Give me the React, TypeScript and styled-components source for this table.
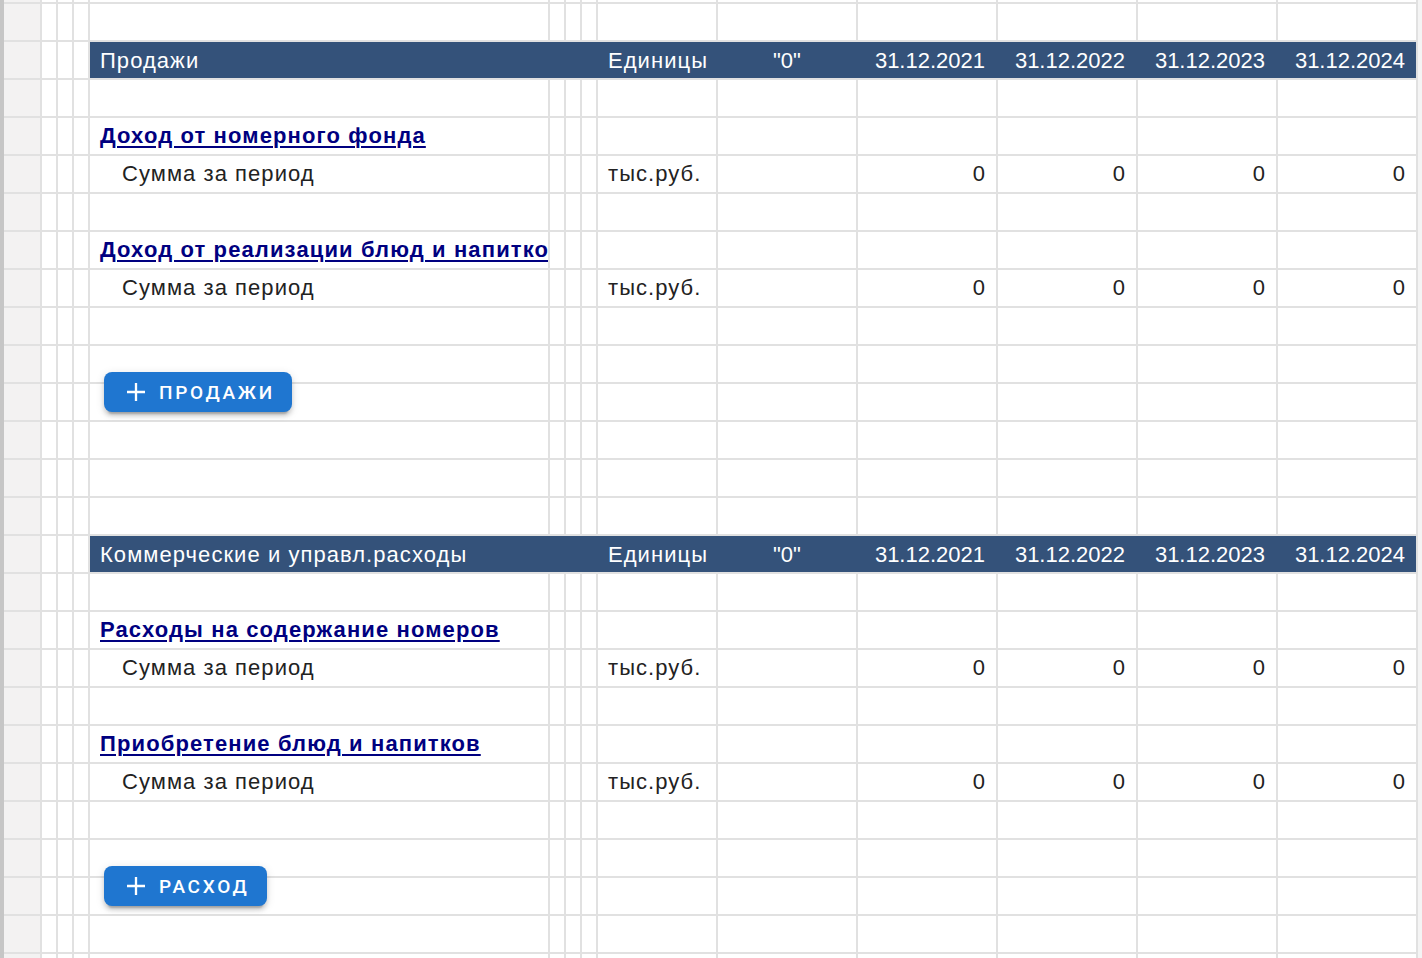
import React from 'react';
import styled, { createGlobalStyle } from 'styled-components';

const COLS = [36, 14, 14, 14, 458, 14, 14, 14, 118, 138, 138, 138, 138, 138];
const DATES = ['31.12.2021', '31.12.2022', '31.12.2023', '31.12.2024'];

const GlobalStyle = createGlobalStyle`
  html, body { margin: 0; padding: 0; background: #fff; overflow: hidden; }
  body { font-family: "Liberation Sans", Arial, Helvetica, sans-serif; }
`;

const Page = styled.div`
  display: flex;
  align-items: flex-start;
  width: 1422px;
  height: 958px;
  overflow: hidden;
  background: #f4f4f4;
`;

const LeftEdge = styled.div`
  width: 4px;
  height: 100%;
  flex: none;
  background: #c6c6c6;
`;

const Sheet = styled.div`
  display: grid;
  grid-template-columns: ${COLS.map((c) => `${c}px`).join(' ')};
  grid-template-rows: 2px;
  grid-auto-rows: 36px;
  gap: 2px;
  padding-right: 2px;
  background: #e1e1e1;
  flex: none;
`;

const Cell = styled.div<{ $gutter?: boolean; $align?: 'left' | 'right' | 'center'; $indent?: number }>`
  position: relative;
  background: ${(p) => (p.$gutter ? '#f3f2f2' : '#ffffff')};
  font-size: 22px;
  line-height: 36px;
  color: #222222;
  white-space: nowrap;
  overflow: ${(p) => (p.$indent !== undefined ? 'visible' : 'hidden')};
  text-align: ${(p) => p.$align ?? 'left'};
  padding: 0 ${(p) => (p.$align === 'right' ? '11px' : '0')} 0 ${(p) => (p.$indent ?? 0)}px;
  min-width: 0;
`;

const ClipCell = styled(Cell)`
  overflow: hidden;
`;

/* Cyrillic labels: the reference face sets Cyrillic a little wider than Liberation Sans */
const Label = styled.span`
  letter-spacing: 1.05px;
`;

const HeaderBar = styled.div`
  grid-column: 5 / span 10;
  display: grid;
  grid-template-columns: ${COLS.slice(4).map((c) => `${c}px`).join(' ')};
  gap: 2px;
  background: #34527a;
  color: #ffffff;
  font-size: 22px;
  line-height: 37px;
  white-space: nowrap;
`;

const HeaderCell = styled.div<{ $align?: 'left' | 'right' | 'center'; $span?: number }>`
  grid-column: span ${(p) => p.$span ?? 1};
  text-align: ${(p) => p.$align ?? 'left'};
  padding: ${(p) => (p.$align === 'right' ? '0 11px 0 0' : p.$align === 'center' ? '0' : '0 0 0 10px')};
  overflow: hidden;
`;

const SectionLink = styled.a`
  color: #000080;
  font-weight: 700;
  letter-spacing: 1.12px;
  text-decoration: underline;
  text-decoration-thickness: 2px;
  text-underline-offset: 3px;
  cursor: pointer;
`;

const AddButton = styled.button`
  position: absolute;
  z-index: 2;
  top: 26px;
  left: 14px;
  height: 40px;
  display: inline-flex;
  align-items: center;
  gap: 14px;
  padding: 0 17px 0 23px;
  border: none;
  border-radius: 8px;
  background: #1f76d0;
  color: #ffffff;
  font-family: Roboto, "Liberation Sans", sans-serif;
  font-weight: 500;
  font-size: 19px;
  letter-spacing: 2.7px;
  text-transform: uppercase;
  box-shadow: 0 6px 2px -4px rgba(0, 0, 0, 0.2), 0 4px 4px 0 rgba(0, 0, 0, 0.14), 0 2px 10px 0 rgba(0, 0, 0, 0.12);
  cursor: pointer;
  white-space: nowrap;
`;

const PlusIcon = () => (
  <svg width="18" height="18" viewBox="5 5 14 14" fill="#ffffff" aria-hidden="true">
    <path d="M19 12.9h-6.1V19h-1.8v-6.1H5v-1.8h6.1V5h1.8v6.1H19z" />
  </svg>
);

type Row =
  | { kind: 'top' }
  | { kind: 'empty' }
  | { kind: 'header'; title: string }
  | { kind: 'link'; title: string }
  | { kind: 'sum' }
  | { kind: 'button'; label: string };

const rows: Row[] = [
  { kind: 'top' },
  { kind: 'empty' },
  { kind: 'header', title: 'Продажи' },
  { kind: 'empty' },
  { kind: 'link', title: 'Доход от номерного фонда' },
  { kind: 'sum' },
  { kind: 'empty' },
  { kind: 'link', title: 'Доход от реализации блюд и напитков' },
  { kind: 'sum' },
  { kind: 'empty' },
  { kind: 'button', label: 'Продажи' },
  { kind: 'empty' },
  { kind: 'empty' },
  { kind: 'empty' },
  { kind: 'empty' },
  { kind: 'header', title: 'Коммерческие и управл.расходы' },
  { kind: 'empty' },
  { kind: 'link', title: 'Расходы на содержание номеров' },
  { kind: 'sum' },
  { kind: 'empty' },
  { kind: 'link', title: 'Приобретение блюд и напитков' },
  { kind: 'sum' },
  { kind: 'empty' },
  { kind: 'button', label: 'Расход' },
  { kind: 'empty' },
  { kind: 'empty' },
  { kind: 'empty' },
];

function renderRow(row: Row, r: number) {
  const cells: React.ReactNode[] = [];
  const key = (c: number) => `${r}-${c}`;

  if (row.kind === 'header') {
    cells.push(<Cell key={key(0)} $gutter />);
    for (let c = 1; c < 4; c++) cells.push(<Cell key={key(c)} />);
    cells.push(
      <HeaderBar key={key(4)}>
        <HeaderCell>
          <Label>{row.title}</Label>
        </HeaderCell>
        <HeaderCell $span={3} />
        <HeaderCell>
          <Label>Единицы</Label>
        </HeaderCell>
        <HeaderCell $align="center">"0"</HeaderCell>
        {DATES.map((d) => (
          <HeaderCell key={d} $align="right">
            {d}
          </HeaderCell>
        ))}
      </HeaderBar>
    );
    return cells;
  }

  for (let c = 0; c < COLS.length; c++) {
    if (c === 0) {
      cells.push(<Cell key={key(c)} $gutter />);
      continue;
    }
    if (c === 4 && row.kind === 'link') {
      cells.push(
        <ClipCell key={key(c)} $indent={10}>
          <SectionLink>{row.title}</SectionLink>
        </ClipCell>
      );
      continue;
    }
    if (c === 4 && row.kind === 'sum') {
      cells.push(
        <ClipCell key={key(c)} $indent={32}>
          <Label>Сумма за период</Label>
        </ClipCell>
      );
      continue;
    }
    if (c === 4 && row.kind === 'button') {
      cells.push(
        <Cell key={key(c)} $indent={0}>
          <AddButton type="button">
            <PlusIcon />
            {row.label}
          </AddButton>
        </Cell>
      );
      continue;
    }
    if (c === 8 && row.kind === 'sum') {
      cells.push(
        <ClipCell key={key(c)} $indent={10}>
          <Label>тыс.руб.</Label>
        </ClipCell>
      );
      continue;
    }
    if (c >= 10 && row.kind === 'sum') {
      cells.push(
        <Cell key={key(c)} $align="right">
          0
        </Cell>
      );
      continue;
    }
    cells.push(<Cell key={key(c)} />);
  }
  return cells;
}

export default function App() {
  return (
    <>
      <GlobalStyle />
      <Page>
        <LeftEdge />
        <Sheet>{rows.map((row, r) => renderRow(row, r))}</Sheet>
      </Page>
    </>
  );
}
